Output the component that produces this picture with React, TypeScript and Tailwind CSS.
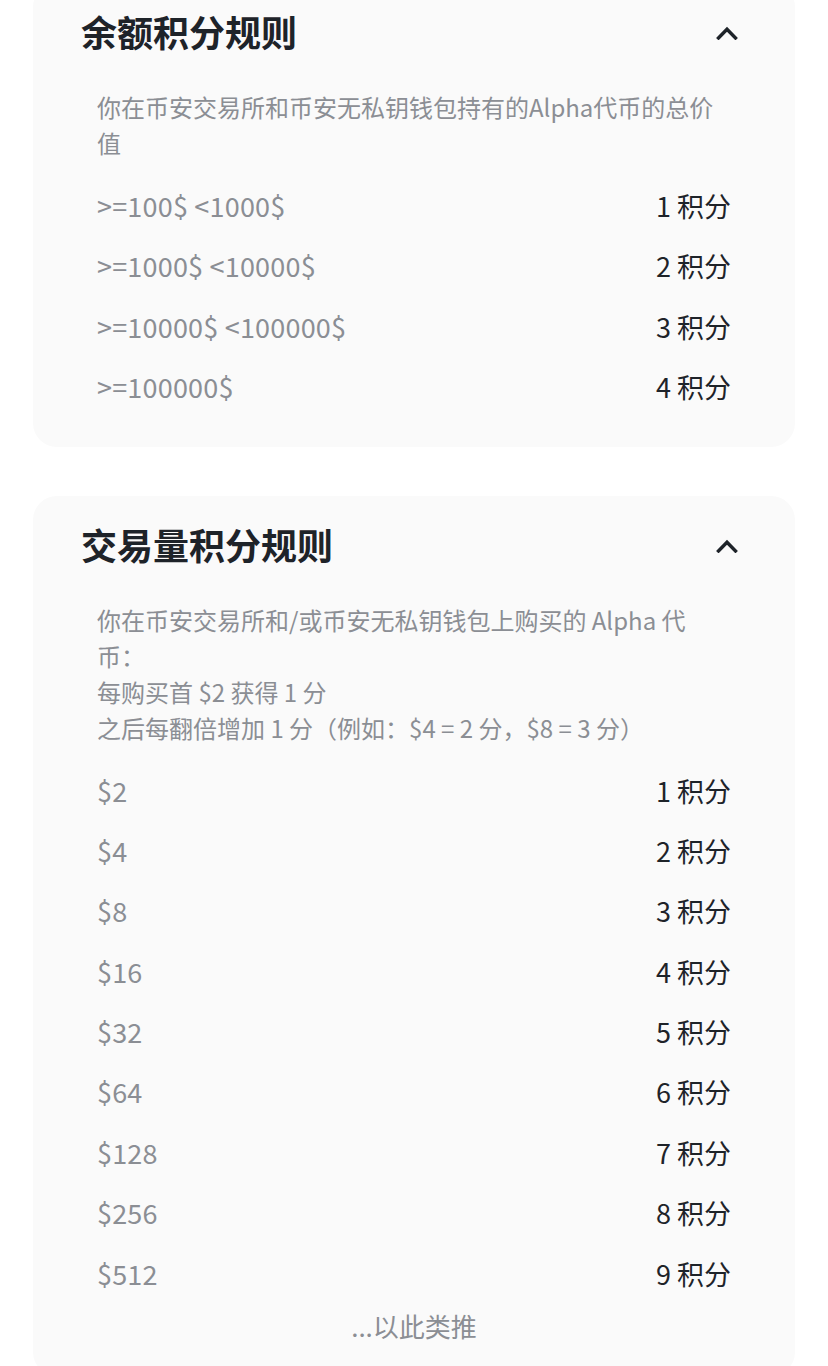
const font = { fontFamily: '"Noto Sans CJK SC", "Noto Sans", sans-serif' };

const balanceRows = [
  { label: ">=100$ <1000$", points: 1 },
  { label: ">=1000$ <10000$", points: 2 },
  { label: ">=10000$ <100000$", points: 3 },
  { label: ">=100000$", points: 4 },
];

const volumeRows = [2, 4, 8, 16, 32, 64, 128, 256, 512].map((v, i) => ({
  label: `$${v}`,
  points: i + 1,
}));

function ChevronUp() {
  return (
    <svg width="22" height="14" viewBox="0 0 22 14" fill="none">
      <path d="M2.5 12L11 3.2L19.5 12" stroke="#1e2329" strokeWidth="3.4" strokeLinecap="square" strokeLinejoin="miter" />
    </svg>
  );
}

function RuleCard({
  title,
  desc,
  rows,
  footer,
  className = "",
}: {
  title: string;
  desc: string[];
  rows: { label: string; points: number }[];
  footer?: string;
  className?: string;
}) {
  return (
    <section className={`mx-[33px] rounded-[24px] bg-[#fafafa] ${className}`}>
      <div className="flex items-center justify-between pl-[48px] pr-[57px] pt-[27px]">
        <h2 className="text-[36px] font-semibold leading-[42px] text-[#1e2329]">{title}</h2>
        <div className="pt-[4px]">
          <ChevronUp />
        </div>
      </div>
      <div className="px-[64px] pt-[37px]">
        <div className="text-[24px] leading-[36px] text-[#8b8e94]">
          {desc.map((d) => (
            <p key={d}>{d}</p>
          ))}
        </div>
        <div className="mt-[15px]">
          {rows.map((r) => (
            <div key={r.label} className="flex h-[60.4px] items-center justify-between text-[27px]">
              <span className="tracking-[0.2px] text-[#8b8e94]">{r.label}</span>
              <span className="text-[#1e2329]">{r.points} 积分</span>
            </div>
          ))}
        </div>
        {footer && (
          <p className="pb-[30px] pt-[2px] text-center text-[26px] leading-[40px] text-[#8b8e94]">{footer}</p>
        )}
      </div>
      {!footer && <div className="h-[29px]" />}
    </section>
  );
}

export default function App() {
  return (
    <div className="min-h-screen bg-white pb-10" style={font}>
      <div className="-mt-[17px]">
        <RuleCard
          title="余额积分规则"
          desc={["你在币安交易所和币安无私钥钱包持有的Alpha代币的总价", "值"]}
          rows={balanceRows}
        />
        <RuleCard
          className="mt-[49px]"
          title="交易量积分规则"
          desc={[
            "你在币安交易所和/或币安无私钥钱包上购买的 Alpha 代",
            "币：",
            "每购买首 $2 获得 1 分",
            "之后每翻倍增加 1 分（例如：$4 = 2 分，$8 = 3 分）",
          ]}
          rows={volumeRows}
          footer="...以此类推"
        />
      </div>
    </div>
  );
}
